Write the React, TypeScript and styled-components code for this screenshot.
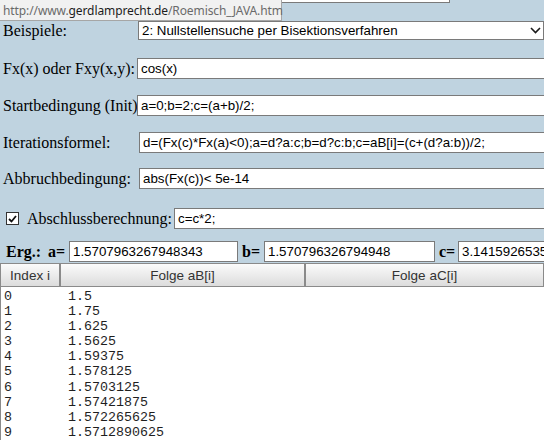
import React from 'react';
import styled, { createGlobalStyle } from 'styled-components';

const GlobalStyle = createGlobalStyle`
  html, body {
    margin: 0;
    padding: 0;
    background: #bfd3e0;
    overflow: hidden;
  }
  body {
    font-family: "Liberation Serif", "Times New Roman", serif;
  }
`;

const Page = styled.div`
  position: relative;
  width: 544px;
  height: 440px;
  overflow: hidden;
  background: #bfd3e0;
`;

const StatusTip = styled.div`
  position: absolute;
  top: 0;
  left: 0;
  width: 282px;
  height: 21px;
  box-sizing: border-box;
  padding: 2px 0 0 3px;
  background: #f1f1f1;
  border-right: 1px solid #a6a6a6;
  border-bottom: 1px solid #a6a6a6;
  font: 12px "Noto Sans", "Open Sans", sans-serif;
  letter-spacing: -0.1px;
  color: #6a6a6a;
  white-space: nowrap;
  z-index: 2;
`;

const TipHost = styled.span`
  color: #1c1c1c;
`;

const Row = styled.div<{ $top: number; $h?: number }>`
  display: flex;
  align-items: center;
  margin-top: ${({ $top }) => $top}px;
  height: ${({ $h }) => $h ?? 21}px;
  white-space: nowrap;
`;

const Label = styled.label<{ $w: number }>`
  width: ${({ $w }) => $w}px;
  flex-shrink: 0;
  box-sizing: border-box;
  padding-left: 3px;
  font: 16px "Liberation Serif", "Times New Roman", serif;
  color: #000;
`;

const Field = styled.input<{ $w?: number }>`
  box-sizing: border-box;
  flex-shrink: 0;
  height: 21px;
  width: ${({ $w }) => ($w ? `${$w}px` : '460px')};
  margin: 0;
  padding: 0 3px;
  border: 1px solid #7a7a7a;
  border-radius: 0;
  background: #fff;
  font: 13.33px "Liberation Sans", Arial, sans-serif;
  color: #000;
  outline: none;
`;

const SelectBox = styled.div`
  box-sizing: border-box;
  flex-shrink: 0;
  width: 406px;
  height: 19px;
  display: flex;
  align-items: center;
  justify-content: space-between;
  padding: 0 2px 0 3px;
  border: 1px solid #7a7a7a;
  background: #fff;
  font: 13.33px "Liberation Sans", Arial, sans-serif;
  color: #000;
`;

const CheckLabel = styled.label`
  width: 174px;
  flex-shrink: 0;
  box-sizing: border-box;
  display: flex;
  align-items: center;
  gap: 8px;
  padding-left: 6px;
  font: 16px "Liberation Serif", "Times New Roman", serif;
  color: #000;
`;

const CheckBox = styled.span`
  width: 13px;
  height: 13px;
  box-sizing: border-box;
  border: 1px solid #333;
  background: #fff;
  display: flex;
  align-items: center;
  justify-content: center;
`;

const ErgTitle = styled.b`
  width: 48px;
  flex-shrink: 0;
  box-sizing: border-box;
  padding-left: 6px;
  font-size: 16px;
`;

const VarName = styled.b<{ $w: number; $ml?: number }>`
  width: ${({ $w }) => $w}px;
  margin-left: ${({ $ml }) => $ml ?? 0}px;
  flex-shrink: 0;
  font-size: 16px;
`;

const HeaderRow = styled.div`
  display: grid;
  grid-template-columns: 60px 245px 1fr;
  margin-top: 1px;
  height: 24px;
`;

const HeaderCell = styled.div`
  box-sizing: border-box;
  display: flex;
  align-items: center;
  justify-content: center;
  border: 1px solid #8a8a8a;
  background: linear-gradient(#fbfbfb, #dcdcdc);
  font: 13.5px "Liberation Sans", Arial, sans-serif;
  color: #333;
`;

const List = styled.div`
  box-sizing: border-box;
  height: 160px;
  padding: 2px 0 0 3px;
  background: #fff;
  border-left: 1px solid #8a8a8a;
  font: 13.33px "Liberation Mono", "Courier New", monospace;
  line-height: 15.1px;
  color: #1e1e1e;
`;

const ListRow = styled.div`
  display: flex;
`;

const IndexCell = styled.span`
  width: 64px;
  flex-shrink: 0;
`;

const sequence = [
  '1.5',
  '1.75',
  '1.625',
  '1.5625',
  '1.59375',
  '1.578125',
  '1.5703125',
  '1.57421875',
  '1.572265625',
  '1.5712890625',
];

const App: React.FC = () => (
  <Page>
    <GlobalStyle />
    <StatusTip>
      http://www.<TipHost>gerdlamprecht.de</TipHost>/Roemisch_JAVA.htm
    </StatusTip>

    <Row $top={-18}>
      <Label $w={137} />
      <Field $w={313} readOnly defaultValue="" />
    </Row>

    <Row $top={18} $h={19}>
      <Label $w={138}>Beispiele:</Label>
      <SelectBox>
        <span>2: Nullstellensuche per Bisektionsverfahren</span>
        <svg width="11" height="7" viewBox="0 0 11 7">
          <path d="M1 1 L5.5 5.5 L10 1" fill="none" stroke="#1a1a1a" strokeWidth="1.6" />
        </svg>
      </SelectBox>
    </Row>

    <Row $top={18}>
      <Label $w={137}>Fx(x) oder Fxy(x,y):</Label>
      <Field readOnly defaultValue="cos(x)" />
    </Row>

    <Row $top={16}>
      <Label $w={137}>Startbedingung (Init)</Label>
      <Field readOnly defaultValue="a=0;b=2;c=(a+b)/2;" />
    </Row>

    <Row $top={16}>
      <Label $w={139}>Iterationsformel:</Label>
      <Field readOnly defaultValue="d=(Fx(c)*Fx(a)<0);a=d?a:c;b=d?c:b;c=aB[i]=(c+(d?a:b))/2;" />
    </Row>

    <Row $top={15}>
      <Label $w={139}>Abbruchbedingung:</Label>
      <Field readOnly defaultValue="abs(Fx(c))< 5e-14" />
    </Row>

    <Row $top={19}>
      <CheckLabel>
        <CheckBox>
          <svg width="9" height="8" viewBox="0 0 9 8">
            <path d="M1 4 L3.5 6.5 L8 1" fill="none" stroke="#111" strokeWidth="1.8" />
          </svg>
        </CheckBox>
        Abschlussberechnung:
      </CheckLabel>
      <Field readOnly defaultValue="c=c*2;" />
    </Row>

    <Row $top={12}>
      <ErgTitle>Erg.:</ErgTitle>
      <VarName $w={21}>a=</VarName>
      <Field $w={169} readOnly defaultValue="1.5707963267948343" />
      <VarName $w={22} $ml={4}>b=</VarName>
      <Field $w={171} readOnly defaultValue="1.570796326794948" />
      <VarName $w={19} $ml={4}>c=</VarName>
      <Field $w={200} readOnly defaultValue="3.141592653589793" />
    </Row>

    <HeaderRow>
      <HeaderCell>Index i</HeaderCell>
      <HeaderCell>Folge aB[i]</HeaderCell>
      <HeaderCell>Folge aC[i]</HeaderCell>
    </HeaderRow>

    <List>
      {sequence.map((v, i) => (
        <ListRow key={v}>
          <IndexCell>{i}</IndexCell>
          <span>{v}</span>
        </ListRow>
      ))}
    </List>
  </Page>
);

export default App;
